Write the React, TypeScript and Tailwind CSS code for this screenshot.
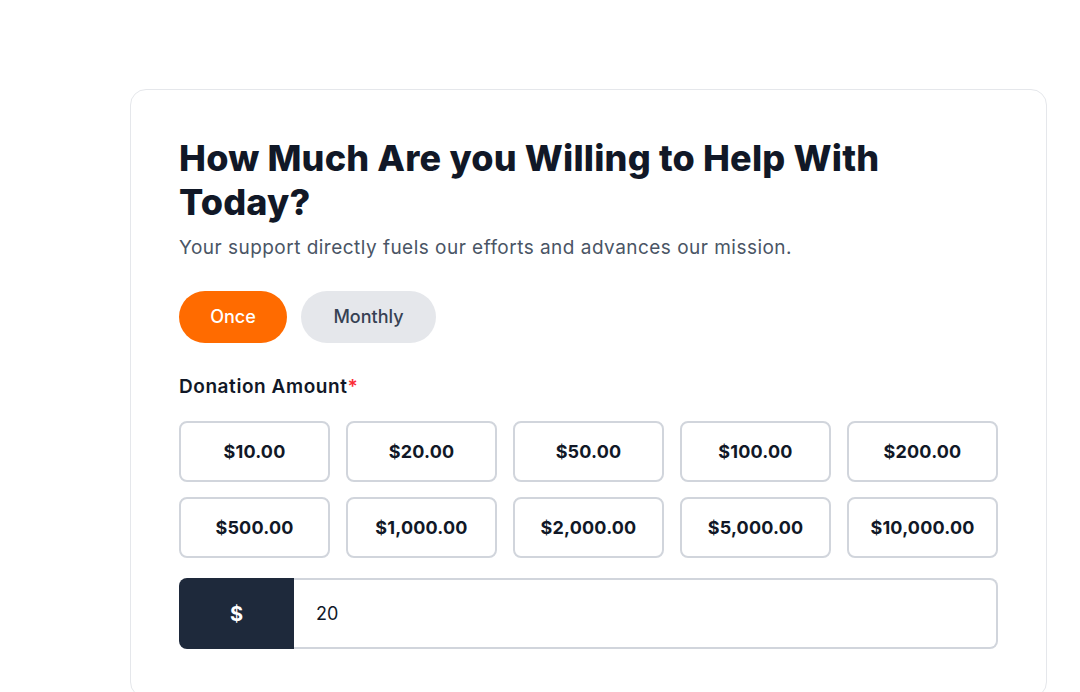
import { useState } from 'react'

const amounts = [
  '$10.00',
  '$20.00',
  '$50.00',
  '$100.00',
  '$200.00',
  '$500.00',
  '$1,000.00',
  '$2,000.00',
  '$5,000.00',
  '$10,000.00',
]

export default function App() {
  const [freq, setFreq] = useState<'once' | 'monthly'>('once')
  const [amount, setAmount] = useState('20')

  return (
    <div className="min-h-screen bg-white font-['Inter',sans-serif] text-[#111827]">
      <div className="pl-[130px] pr-[33px] pt-[89px]">
        <div className="rounded-2xl border border-gray-200 bg-white px-12 pt-[46px] pb-12">
          <h1 className="text-[36px] font-extrabold leading-[44px] tracking-[0.005em] text-[#111827]">
            How Much Are you Willing to Help With Today?
          </h1>
          <p className="mt-[10px] text-[19px] leading-7 tracking-[0.025em] text-gray-600">
            Your support directly fuels our efforts and advances our mission.
          </p>

          <div className="mt-[29px] flex gap-3.5">
            <button
              onClick={() => setFreq('once')}
              className={
                freq === 'once'
                  ? 'h-[52px] w-[108px] rounded-full bg-[#ff6b00] text-lg font-medium text-white'
                  : 'h-[52px] w-[108px] rounded-full bg-gray-200 text-lg font-medium text-gray-700'
              }
            >
              Once
            </button>
            <button
              onClick={() => setFreq('monthly')}
              className={
                freq === 'monthly'
                  ? 'h-[52px] w-[135px] rounded-full bg-[#ff6b00] text-lg font-medium text-white'
                  : 'h-[52px] w-[135px] rounded-full bg-gray-200 text-lg font-medium text-gray-700'
              }
            >
              Monthly
            </button>
          </div>

          <p className="mt-[30px] text-[19px] font-semibold leading-7 tracking-[0.03em]">
            Donation Amount<span className="text-red-500">*</span>
          </p>

          <div className="mt-5 grid grid-cols-5 gap-x-4 gap-y-[15px]">
            {amounts.map((a) => (
              <button
                key={a}
                onClick={() => setAmount(a.replace(/[$,]/g, '').replace('.00', ''))}
                className="h-[61px] rounded-lg border-2 border-gray-300 bg-white text-lg font-bold tracking-[0.01em] text-[#111827]"
              >
                {a}
              </button>
            ))}
          </div>

          <div className="mt-5 flex h-[71px]">
            <div className="flex w-[115px] items-center justify-center rounded-l-lg bg-[#1e293b] text-xl font-bold text-white">
              $
            </div>
            <input
              value={amount}
              onChange={(e) => setAmount(e.target.value)}
              className="min-w-0 flex-1 rounded-r-lg border-2 border-l-0 border-gray-300 px-[22px] text-lg text-[#111827] outline-none"
            />
          </div>
        </div>
      </div>
    </div>
  )
}
